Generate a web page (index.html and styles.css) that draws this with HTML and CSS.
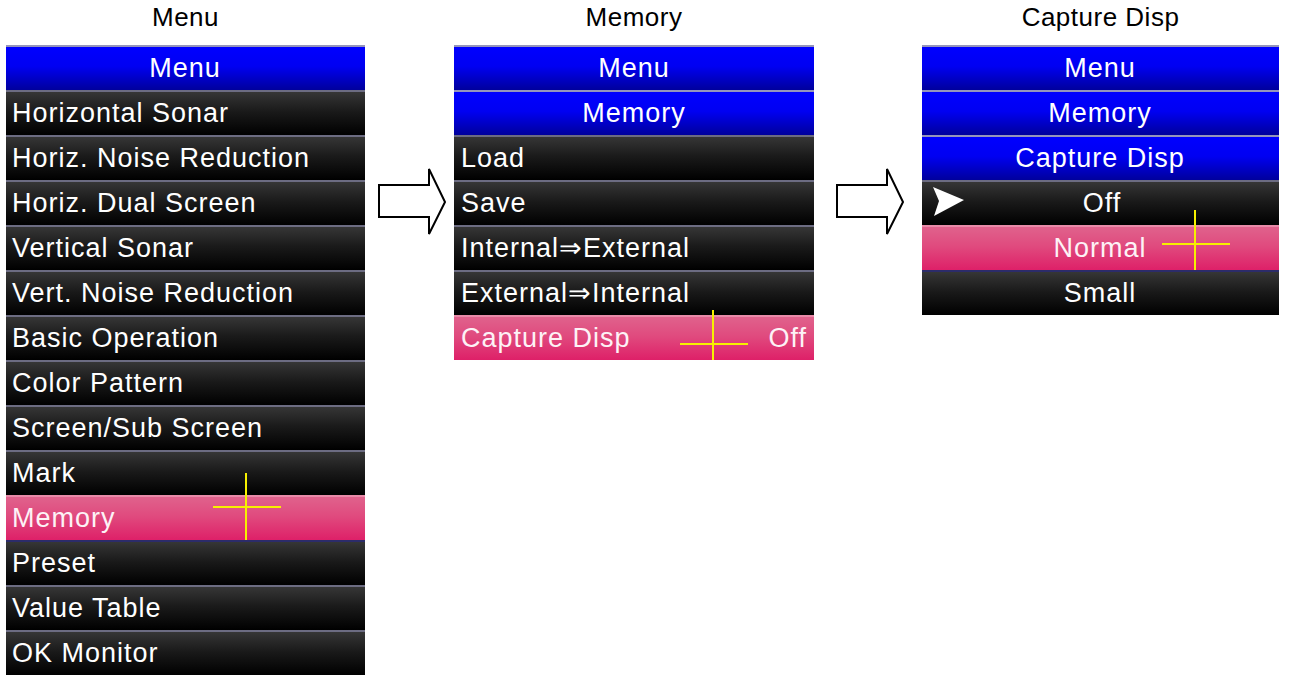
FILE: index.html
```html
<!DOCTYPE html>
<html lang="en">
<head>
  <meta charset="UTF-8" />
  <title>Menu - Memory - Capture Disp</title>
  <link rel="stylesheet" href="styles.css">
</head>
<body>

  <div class="page">

    <section class="col col-menu">
      <h2 class="title">Menu</h2>
      <ul class="panel">
        <li class="row head">Menu</li>
        <li class="row">Horizontal Sonar</li>
        <li class="row">Horiz. Noise Reduction</li>
        <li class="row">Horiz. Dual Screen</li>
        <li class="row">Vertical Sonar</li>
        <li class="row">Vert. Noise Reduction</li>
        <li class="row">Basic Operation</li>
        <li class="row">Color Pattern</li>
        <li class="row">Screen/Sub Screen</li>
        <li class="row">Mark</li>
        <li class="row sel">Memory<span class="cross cross-menu"></span></li>
        <li class="row after-sel">Preset</li>
        <li class="row">Value Table</li>
        <li class="row">OK Monitor</li>
      </ul>
    </section>

    <div class="step step-1">
      <svg width="68" height="68" viewBox="0 0 68 68">
        <path d="M1 17 H51 V1 L67 34 L51 66 V49 H1 Z" fill="#fff" stroke="#000" stroke-width="2" stroke-linejoin="miter" />
      </svg>
    </div>

    <section class="col col-memory">
      <h2 class="title">Memory</h2>
      <ul class="panel">
        <li class="row head">Menu</li>
        <li class="row head">Memory</li>
        <li class="row">Load</li>
        <li class="row">Save</li>
        <li class="row">Internal&rArr;External</li>
        <li class="row">External&rArr;Internal</li>
        <li class="row sel split">
          <span>Capture Disp</span>
          <span>Off</span>
          <span class="cross cross-memory"></span>
        </li>
      </ul>
    </section>

    <div class="step step-2">
      <svg width="68" height="68" viewBox="0 0 68 68">
        <path d="M1 17 H51 V1 L67 34 L51 66 V49 H1 Z" fill="#fff" stroke="#000" stroke-width="2" stroke-linejoin="miter" />
      </svg>
    </div>

    <section class="col col-capture">
      <h2 class="title">Capture Disp</h2>
      <ul class="panel centered">
        <li class="row head">Menu</li>
        <li class="row head">Memory</li>
        <li class="row head">Capture Disp</li>
        <li class="row current">
          <svg class="marker" width="33" height="30" viewBox="0 0 33 30">
            <path d="M1 0 L32 13 L2 29 L7 14 Z" fill="#fff" />
          </svg>
          <span>Off</span>
          <span></span>
        </li>
        <li class="row sel">Normal<span class="cross cross-capture"></span></li>
        <li class="row after-sel">Small</li>
      </ul>
    </section>

  </div>

</body>
</html>
```

FILE: styles.css
```css
body {
  margin: 0;
  background-color: #fff;
  font-family: "Liberation Sans", Arial, sans-serif;
}

.page {
  display: flex;
  align-items: flex-start;
  padding-left: 6px;
}

.col {
  display: flex;
  flex-direction: column;
}

.col-menu {
  width: 359px;
}

.col-memory {
  width: 360px;
}

.col-capture {
  width: 357px;
}

.title {
  margin: 0;
  height: 45px;
  line-height: 34px;
  font-size: 26px;
  font-weight: normal;
  color: #000;
  text-align: center;
  letter-spacing: 0.5px;
}

.step {
  flex: none;
  margin-top: 168px;
  height: 68px;
}

.step svg {
  display: block;
}

.step-1 {
  width: 89px;
}

.step-1 svg {
  margin-left: 13px;
}

.step-2 {
  width: 108px;
}

.step-2 svg {
  margin-left: 22px;
}

/* panel rows */

.panel {
  list-style: none;
  margin: 0;
  padding: 0;
  overflow: hidden;
}

.row {
  position: relative;
  box-sizing: border-box;
  height: 45px;
  padding: 0 7px 0 6px;
  border-top: 2px solid #6c6c82;
  background: linear-gradient(#363636, #1a1a1a 45%, #000);
  color: #fff;
  font-size: 27px;
  line-height: 43px;
  letter-spacing: 1px;
  white-space: nowrap;
}

.col-memory .row {
  padding-left: 7px;
}

.row.head {
  border-top-color: #9494bc;
  background: linear-gradient(#0000ff, #0000f2 45%, #00009c);
  text-align: center;
}

.row.sel {
  border-top-color: #e88aa8;
  background: linear-gradient(#e0628c, #e04a7e 45%, #de2068);
  color: #fdf2f6;
}

.row.after-sel {
  border-top-color: #2c2c6a;
}

.row.split {
  display: flex;
  justify-content: space-between;
}

.centered .row {
  text-align: center;
}

.row.current {
  display: grid;
  grid-template-columns: 1fr auto 1fr;
  align-items: center;
  padding-left: 10px;
}

.marker {
  display: block;
  margin-top: -4px;
}

/* yellow cursor */

.cross {
  position: absolute;
  width: 68px;
  height: 70px;
}

.cross::before,
.cross::after {
  content: "";
  position: absolute;
  background-color: #f6f000;
}

.cross::before {
  left: 0;
  right: 0;
  top: 33px;
  height: 2px;
}

.cross::after {
  top: 0;
  bottom: 0;
  left: 32px;
  width: 2px;
}

.cross-menu {
  left: 207px;
  top: -24px;
}

.cross-memory {
  left: 226px;
  top: -7px;
}

.cross-capture {
  left: 240px;
  top: -17px;
}
```
